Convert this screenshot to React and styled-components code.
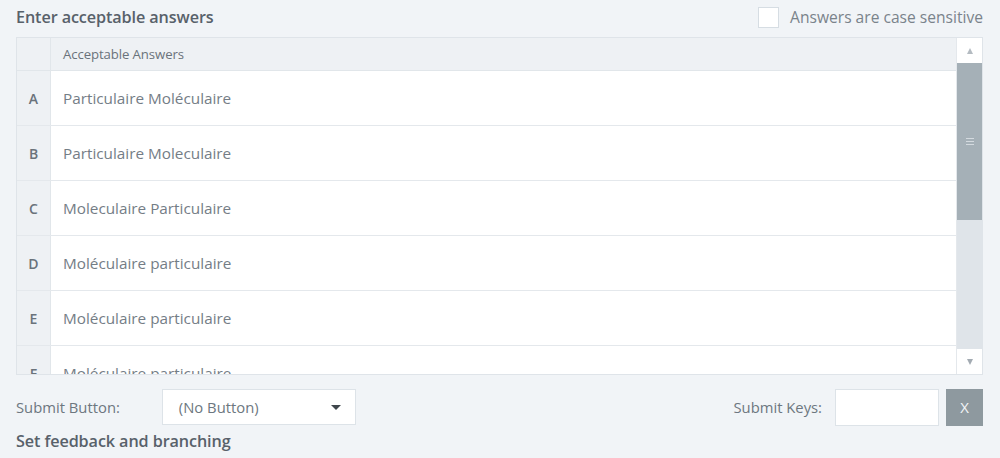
import React from "react";
import styled, {createGlobalStyle} from "styled-components";

const GlobalStyle = createGlobalStyle`
    html, body{
        margin: 0;
        padding: 0;
        background: #f1f4f7;
    }
    body{
        font-family: "Open Sans", "Noto Sans", sans-serif;
        color: #6d7780;
    }
`;

const answers = [
    "Particulaire Moléculaire",
    "Particulaire Moleculaire",
    "Moleculaire Particulaire",
    "Moléculaire particulaire",
    "Moléculaire particulaire",
    "Moléculaire particulaire",
];

function App(){
    return(
        <Page>
            <GlobalStyle/>
            <TopBar>
                <Title>Enter acceptable answers</Title>
                <CaseToggle>
                    <Box/>
                    <span>Answers are case sensitive</span>
                </CaseToggle>
            </TopBar>
            <Grid>
                <Rows>
                    <HeaderRow>
                        <Letter/>
                        <HeaderCell>Acceptable Answers</HeaderCell>
                    </HeaderRow>
                    {answers.map((a, i)=>(
                        <Row key={i}>
                            <Letter>{String.fromCharCode(65 + i)}</Letter>
                            <Cell>{a}</Cell>
                        </Row>
                    ))}
                </Rows>
                <Scrollbar>
                    <ArrowBtn><Arrow/></ArrowBtn>
                    <Track>
                        <Thumb>
                            <Grip><i/><i/><i/></Grip>
                        </Thumb>
                    </Track>
                    <ArrowBtn><Arrow $down/></ArrowBtn>
                </Scrollbar>
            </Grid>
            <Controls>
                <Label>Submit Button:</Label>
                <Select>
                    <span>(No Button)</span>
                    <Caret/>
                </Select>
                <Spacer/>
                <Label>Submit Keys:</Label>
                <KeyInput/>
                <ClearButton>X</ClearButton>
            </Controls>
            <Title>Set feedback and branching</Title>
        </Page>
    );
}

const Page = styled.div`
    width: 1000px;
    height: 458px;
    box-sizing: border-box;
    padding: 4px 17px 0 16px;
    overflow: hidden;
`;

const TopBar = styled.div`
    display: flex;
    align-items: center;
    justify-content: space-between;
    height: 26px;
    margin-bottom: 7px;
`;

const Title = styled.div`
    font-size: 16.2px;
    font-weight: 600;
    color: #58616a;
    letter-spacing: -0.1px;
`;

const CaseToggle = styled.label`
    display: flex;
    align-items: center;
    gap: 11px;
    font-size: 15.6px;
    color: #7a838b;
`;

const Box = styled.span`
    width: 21px;
    height: 21px;
    background: #fff;
    border: 1px solid #d6dde3;
    box-sizing: border-box;
`;

const Grid = styled.div`
    display: flex;
    height: 338px;
    border: 1px solid #dfe4e9;
    box-sizing: border-box;
    background: #fff;
`;

const Rows = styled.div`
    flex: 1;
    overflow: hidden;
`;

const Row = styled.div`
    display: flex;
    height: 55px;
    border-bottom: 1px solid #e4e8ec;
    box-sizing: border-box;
`;

const HeaderRow = styled(Row)`
    height: 33px;
    background: #eef1f4;
    border-bottom: 1px solid #e1e6ea;
`;

const Letter = styled.div`
    width: 33px;
    flex: none;
    display: flex;
    align-items: center;
    justify-content: center;
    background: #eef1f4;
    border-right: 1px solid #e1e6ea;
    font-size: 14px;
    font-weight: 600;
    color: #6a737b;
`;

const Cell = styled.div`
    display: flex;
    align-items: center;
    padding-left: 12px;
    font-size: 15.3px;
    color: #747d86;
`;

const HeaderCell = styled(Cell)`
    font-size: 13.2px;
    color: #6a737b;
    letter-spacing: -0.1px;
`;

const Scrollbar = styled.div`
    width: 25px;
    flex: none;
    display: flex;
    flex-direction: column;
    background: #dfe4e9;
    border-left: 1px solid #e4e8ec;
`;

const ArrowBtn = styled.div`
    height: 25px;
    flex: none;
    background: #fff;
    display: flex;
    align-items: center;
    justify-content: center;
`;

const Arrow = styled.span`
    width: 0;
    height: 0;
    border-left: 3px solid transparent;
    border-right: 3px solid transparent;
    ${p => p.$down
        ? "border-top: 6px solid #a3abb2;"
        : "border-bottom: 6px solid #b4bbc1;"}
`;

const Track = styled.div`
    flex: 1;
`;

const Thumb = styled.div`
    height: 157px;
    background: #a5b0b7;
    display: flex;
    align-items: center;
    justify-content: center;
`;

const Grip = styled.div`
    display: flex;
    flex-direction: column;
    gap: 2px;
    i{
        display: block;
        width: 8px;
        height: 1px;
        background: #d4dadf;
    }
`;

const Controls = styled.div`
    display: flex;
    align-items: center;
    margin-top: 14px;
    height: 36px;
    margin-bottom: 5px;
`;

const Label = styled.span`
    font-size: 14.8px;
    color: #6d7780;
`;

const Select = styled.div`
    margin-left: 42px;
    width: 194px;
    height: 36px;
    box-sizing: border-box;
    background: #fff;
    border: 1px solid #dde3e8;
    display: flex;
    align-items: center;
    justify-content: space-between;
    padding: 0 14px 0 16px;
    font-size: 14.8px;
    color: #6d7780;
`;

const Caret = styled.span`
    width: 0;
    height: 0;
    border-left: 5px solid transparent;
    border-right: 5px solid transparent;
    border-top: 5px solid #3f464c;
`;

const Spacer = styled.div`
    flex: 1;
`;

const KeyInput = styled.div`
    margin-left: 13px;
    width: 104px;
    height: 37px;
    box-sizing: border-box;
    background: #fff;
    border: 1px solid #dde3e8;
`;

const ClearButton = styled.div`
    margin-left: 7px;
    width: 37px;
    height: 37px;
    background: #8e999f;
    color: #f3f5f7;
    display: flex;
    align-items: center;
    justify-content: center;
    font-size: 15px;
`;

export default App;
